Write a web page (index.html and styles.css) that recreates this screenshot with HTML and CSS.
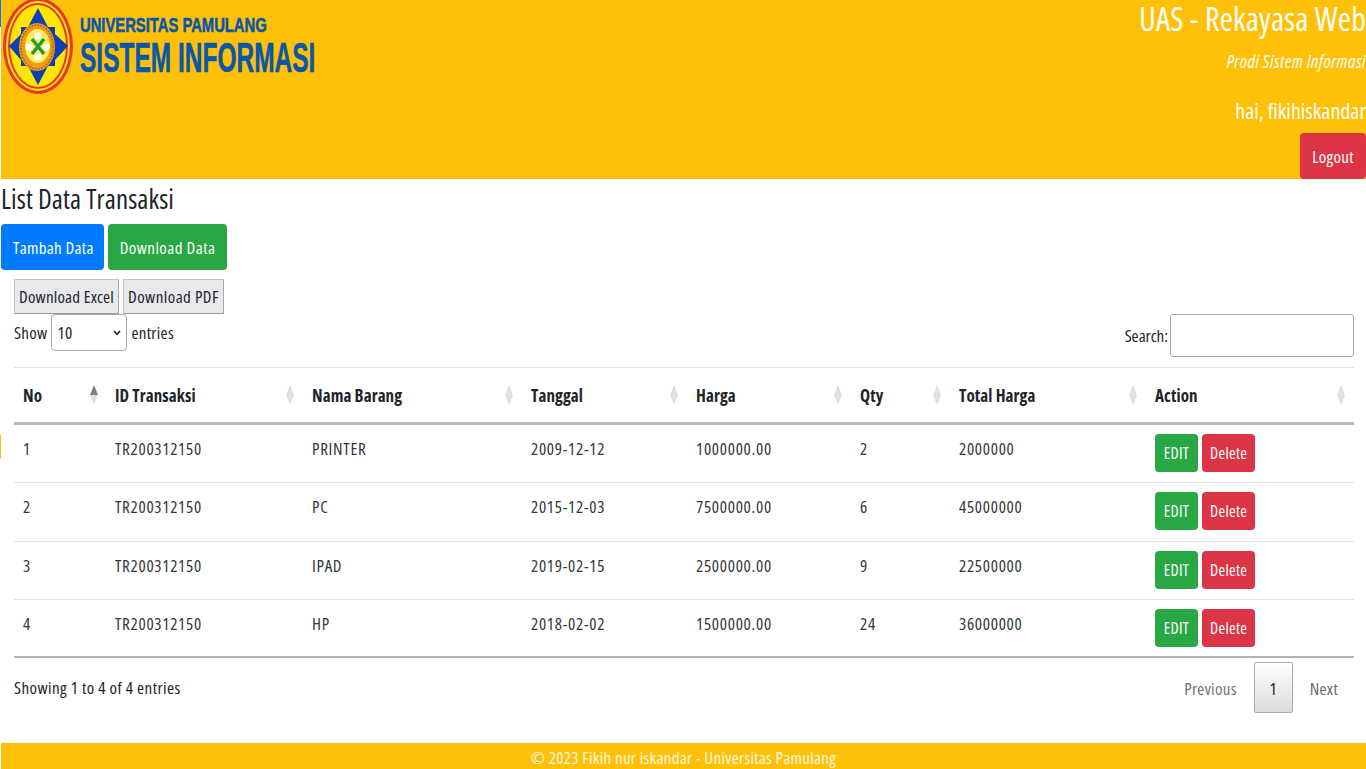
FILE: index.html
```html
<!DOCTYPE html>
<html lang="en">
    <head>
        <title>List Data Transaksi</title>
        <meta name="viewport" content="width=device-width, initial-scale=1">
        <link rel="stylesheet" href="styles.css">
    </head>
    <body>
        <span class="edge-blue"></span>
        <span class="edge-yellow"></span>
        <header class="topbar">
            <div class="brand">
                <svg class="brand-logo" width="78" height="100" viewBox="0 0 78 100">
                    <ellipse cx="38" cy="46" rx="35" ry="48" fill="#e8362e"/>
                    <ellipse cx="38" cy="46" rx="32" ry="45" fill="#ffe600"/>
                    <ellipse cx="38" cy="46" rx="30" ry="43" fill="#e8362e"/>
                    <ellipse cx="38" cy="46" rx="28" ry="41" fill="#ffe600"/>
                    <path d="M38 8 L48 27 L55 27 L55 34 L68 46 L55 60 L55 66 L48 66 L38 85 L28 66 L21 66 L21 60 L9 46 L21 34 L21 27 L28 27 Z" fill="#0d3fb8"/>
                    <ellipse cx="37" cy="47" rx="18" ry="24" fill="#f09a12"/>
                    <ellipse cx="37" cy="47" rx="16" ry="22" fill="none" stroke="#8a6a20" stroke-width="1.5" stroke-dasharray="1.5 1.5"/>
                    <ellipse cx="37.500" cy="46" rx="12.500" ry="17" fill="#ffef5c"/>
                    <path d="M32 39 L44 54 M44 39 L32 54" stroke="#1f9a3c" stroke-width="3.400"/>
                    <circle cx="38" cy="36" r="3.600" fill="#fff"/>
                    <circle cx="38" cy="57" r="3.600" fill="#fff"/>
                    <circle cx="29" cy="47" r="3.600" fill="#fff"/>
                    <circle cx="46" cy="47" r="3.600" fill="#fff"/>
                </svg>
                <div class="brand-text">
                    <div class="brand-univ">UNIVERSITAS PAMULANG</div>
                    <div class="brand-prodi">SISTEM INFORMASI</div>
                </div>
            </div>
            <div class="top-right">
                <h2>UAS - Rekayasa Web</h2>
                <p class="prodi">Prodi Sistem Informasi</p>
                <p class="greet">hai, fikihiskandar</p>
                <a class="btn btn-red btn-logout">Logout</a>
            </div>
        </header>
        <main>
            <h3 class="page-title">List Data Transaksi</h3>
            <div class="actions">
                <a class="btn btn-blue">Tambah Data</a>
                <a class="btn btn-green">Download Data</a>
            </div>
            <section class="wrapper">
                <div class="exports">
                    <button>Download Excel</button>
                    <button>Download PDF</button>
                </div>
                <div class="controls">
                    <label class="length">Show
                        <span class="select-box">10
                            <svg width="8" height="6" viewBox="0 0 8 6"><path d="M1 1 L4 4.400 L7 1" fill="none" stroke="#222" stroke-width="1.600"/></svg>
                        </span>
                        entries</label>
                    <label class="search">Search:<input type="text"></label>
                </div>
                <table>
                    <colgroup>
                        <col class="c1"><col class="c2"><col class="c3"><col class="c4"><col class="c5"><col class="c6"><col class="c7"><col class="c8">
                    </colgroup>
                    <thead>
                        <tr>
                            <th class="sorted">No</th>
                            <th>ID Transaksi</th>
                            <th>Nama Barang</th>
                            <th>Tanggal</th>
                            <th>Harga</th>
                            <th>Qty</th>
                            <th>Total Harga</th>
                            <th>Action</th>
                        </tr>
                    </thead>
                    <tbody>
                        <tr>
                            <td>1</td><td>TR200312150</td><td>PRINTER</td><td>2009-12-12</td><td>1000000.00</td><td>2</td><td>2000000</td>
                            <td><div class="row-actions"><a class="btn btn-green btn-sm">EDIT</a><a class="btn btn-red btn-sm">Delete</a></div></td>
                        </tr>
                        <tr>
                            <td>2</td><td>TR200312150</td><td>PC</td><td>2015-12-03</td><td>7500000.00</td><td>6</td><td>45000000</td>
                            <td><div class="row-actions"><a class="btn btn-green btn-sm">EDIT</a><a class="btn btn-red btn-sm">Delete</a></div></td>
                        </tr>
                        <tr>
                            <td>3</td><td>TR200312150</td><td>IPAD</td><td>2019-02-15</td><td>2500000.00</td><td>9</td><td>22500000</td>
                            <td><div class="row-actions"><a class="btn btn-green btn-sm">EDIT</a><a class="btn btn-red btn-sm">Delete</a></div></td>
                        </tr>
                        <tr>
                            <td>4</td><td>TR200312150</td><td>HP</td><td>2018-02-02</td><td>1500000.00</td><td>24</td><td>36000000</td>
                            <td><div class="row-actions"><a class="btn btn-green btn-sm">EDIT</a><a class="btn btn-red btn-sm">Delete</a></div></td>
                        </tr>
                    </tbody>
                </table>
                <div class="table-foot">
                    <div class="info">Showing 1 to 4 of 4 entries</div>
                    <div class="paging">
                        <a class="page-link">Previous</a>
                        <a class="page-current">1</a>
                        <a class="page-link page-next">Next</a>
                    </div>
                </div>
            </section>
        </main>
        <footer class="bottombar">© 2023 Fikih nur iskandar - Universitas Pamulang</footer>
    </body>
</html>
```

FILE: styles.css
```css
:root {
    --yellow: #ffc107;
    --red: #dc3545;
    --green: #28a745;
    --blue: #007bff;
    --ink: #212529;
    --sort-off: #e0e1e4;
    --sort-on: #7d7f85;
}
* { box-sizing: border-box; }
html, body { height: 100%; }
body {
    margin: 0;
    height: 769px;
    overflow: hidden;
    position: relative;
    display: flex;
    flex-direction: column;
    background: #fff;
    color: var(--ink);
    font-family: "Open Sans", "Liberation Sans", sans-serif;
    font-stretch: 75%;
    font-weight: 400;
    font-size: 17px;
    letter-spacing: .3px;
    line-height: 24px;
}
.edge-blue { position: absolute; left: 0; top: 0; width: 1px; height: 27px; background: var(--blue); }
.edge-yellow { position: absolute; left: 0; top: 435px; width: 1px; height: 24px; background: var(--yellow); }

/* top bar */
.topbar {
    margin-left: 1px;
    height: 179px;
    background: var(--yellow);
    display: flex;
    justify-content: space-between;
    overflow: hidden;
}
.brand { display: flex; }
.brand-logo { margin-left: -1px; flex: none; }
.brand-text {
    margin-left: 2px;
    color: #0a56a8;
    font-family: "Liberation Sans", sans-serif;
    font-weight: bold;
    font-stretch: normal;
    letter-spacing: 0;
    white-space: nowrap;
    -webkit-text-stroke: .6px #0a56a8;
}
.brand-univ { font-size: 21px; line-height: 24px; margin-top: 13px; transform: scaleX(.704); transform-origin: left; }
.brand-prodi { font-size: 42px; line-height: 38px; margin-top: 2px; transform: scaleX(.583); transform-origin: left; }
.top-right { display: flex; flex-direction: column; align-items: flex-end; color: #fff; text-align: right; }
.top-right h2 { margin: 0; font-size: 32px; line-height: 38px; font-weight: 400; letter-spacing: .2px; white-space: nowrap; }
.prodi { margin: 11px 0 0; font-size: 18px; font-style: italic; letter-spacing: .5px; }
.greet { margin: 22px 0 0; font-size: 22px; line-height: 30px; letter-spacing: 0; }

.btn {
    display: inline-block;
    color: #fff;
    padding: 12px 12px 10px;
    border-radius: 4px;
    line-height: 24px;
}
.btn-red { background: var(--red); }
.btn-green { background: var(--green); }
.btn-blue { background: var(--blue); }
.btn-logout { margin-top: 8px; width: 66px; height: 46px; text-align: center; padding: 12px 0; }

/* content */
main { flex: 1; min-height: 0; }
.page-title { margin: 0; padding: 3px 0 0 1px; font-size: 27px; line-height: 34px; font-weight: 400; letter-spacing: .1px; }
.actions { display: flex; gap: 4px; padding: 8px 0 0 1px; }
.actions .btn-blue { padding-right: 10px; }
.actions .btn-green { letter-spacing: .45px; }
.wrapper { padding: 9px 12px 0 14px; }
.exports { display: flex; gap: 4px; height: 36px; }
.exports button {
    height: 35px;
    padding: 0 4px;
    border: 1px solid #c4c4c4;
    border-bottom-color: #999;
    border-right-color: #aaa;
    background: #e9e9ed;
    color: var(--ink);
    font: inherit;
    letter-spacing: .2px;
}
.exports button:last-child { letter-spacing: .45px; }
.controls { display: flex; justify-content: space-between; align-items: flex-start; height: 53px; margin-top: -1px; }
.length { display: flex; align-items: center; gap: 4px; height: 37px; }
.select-box {
    width: 76px;
    height: 37px;
    padding: 0 5px;
    border: 1px solid #aaa;
    border-radius: 4px;
    display: flex;
    align-items: center;
    justify-content: space-between;
}
.search { display: flex; align-items: center; gap: 2px; height: 43px; letter-spacing: 0; }
.search input { width: 184px; height: 43px; border: 1px solid #aaa; border-radius: 3px; background: #fff; }

/* table */
table { width: 1340px; border-collapse: collapse; table-layout: fixed; border-top: 1px solid #dee2e6; }
.c1 { width: 92px; } .c2 { width: 197px; } .c3 { width: 219px; } .c4 { width: 165px; }
.c5 { width: 164px; } .c6 { width: 99px; } .c7 { width: 196px; } .c8 { width: 208px; }
th { position: relative; height: 56px; padding: 2px 9px 0; text-align: left; font-weight: 700; letter-spacing: .1px; border-bottom: 3px solid #b9bbbe; }
th::before, th::after {
    content: "";
    position: absolute;
    right: 9px;
    border-left: 4px solid transparent;
    border-right: 4px solid transparent;
}
th::before { top: 17px; border-bottom: 10px solid var(--sort-off); }
th::after { top: 27px; border-top: 10px solid var(--sort-off); }
th.sorted::before { border-bottom-color: var(--sort-on); }
th.sorted::before, th.sorted::after { right: 8px; }
td { height: 59px; padding: 12px 9px 0; vertical-align: top; letter-spacing: .7px; color: #33383d; border-top: 1px solid #dee2e6; }
tbody tr:first-child td { border-top: 0; }
tbody tr:nth-child(3) td { height: 58px; }
tbody tr:last-child td { height: 57px; border-bottom: 2px solid #b3b3b3; }
.row-actions { display: flex; gap: 4px; margin-top: -3px; }
.btn-sm { min-width: 43px; height: 38px; padding: 7px 8px 0; font-size: 16px; letter-spacing: .3px; text-align: center; }

.table-foot { display: flex; justify-content: space-between; }
.info { padding-top: 18px; letter-spacing: .45px; }
.paging { display: flex; align-items: flex-start; padding-top: 4px; }
.page-link { color: #6c757d; padding: 15px 17px 0; }
.page-next { color: #5d6a75; padding-right: 16px; }
.page-current {
    width: 39px;
    height: 51px;
    padding-top: 14px;
    text-align: center;
    border: 1px solid #aaa;
    border-radius: 2px;
    background: linear-gradient(#fff, #dcdcdc);
}

.bottombar {
    margin-left: 1px;
    height: 26px;
    flex: none;
    background: var(--yellow);
    color: #fff8e0;
    text-align: center;
    padding-top: 3px;
}
```
